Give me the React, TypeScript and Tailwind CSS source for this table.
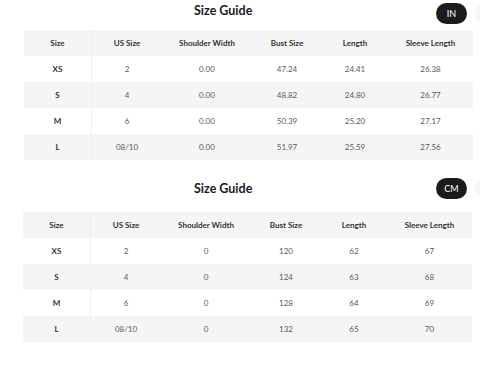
import React from 'react';

type Row = string[];

const headers = ['Size', 'US Size', 'Shoulder Width', 'Bust Size', 'Length', 'Sleeve Length'];

const inchRows: Row[] = [
  ['XS', '2', '0.00', '47.24', '24.41', '26.38'],
  ['S', '4', '0.00', '48.82', '24.80', '26.77'],
  ['M', '6', '0.00', '50.39', '25.20', '27.17'],
  ['L', '08/10', '0.00', '51.97', '25.59', '27.56'],
];

const cmRows: Row[] = [
  ['XS', '2', '0', '120', '62', '67'],
  ['S', '4', '0', '124', '63', '68'],
  ['M', '6', '0', '128', '64', '69'],
  ['L', '08/10', '0', '132', '65', '70'],
];

const cols = 'grid grid-cols-[68px_70px_90px_70px_66px_85px]';

const SizeTable: React.FC<{ rows: Row[]; className?: string }> = ({ rows, className }) => (
  <div className={`w-[449px] ${className ?? ''}`}>
    <div className={`${cols} h-[26px] bg-[#f5f5f5] text-[8px] font-bold text-[#333]`}>
      {headers.map((h, i) => (
        <div
          key={h}
          className={`flex items-center justify-center ${i === 0 ? 'border-r border-[#ececec]' : ''}`}
        >
          {h}
        </div>
      ))}
    </div>
    {rows.map((row, r) => (
      <div
        key={row[0]}
        className={`${cols} h-[26px] text-[8px] ${r % 2 === 1 ? 'bg-[#f5f5f5]' : 'bg-white'}`}
      >
        {row.map((cell, i) => (
          <div
            key={i}
            className={`flex items-center justify-center ${
              i === 0 ? 'border-r border-[#f0f0f0] font-bold text-[#333]' : 'text-[#5a5a5a]'
            }`}
          >
            {cell}
          </div>
        ))}
      </div>
    ))}
  </div>
);

const Header: React.FC<{ unit: string; titleClass: string }> = ({ unit, titleClass }) => (
  <div className="flex items-start">
    <h2 className={`ml-[194px] text-[12.5px] font-bold leading-none text-[#1a1a1a] ${titleClass}`}>
      Size Guide
    </h2>
    <div className="ml-auto mr-[-26px] flex gap-2">
      <span className="flex h-[21px] w-[31px] items-center justify-center rounded-full bg-[#1c1c1c] text-[9px] text-white">
        {unit}
      </span>
      <span className="h-[21px] w-[31px] rounded-full bg-[#f6f6f6]" />
    </div>
  </div>
);

export default function App() {
  return (
    <div
      className="w-[480px] h-[365px] overflow-hidden bg-white"
      style={{ fontFamily: 'Lato, "Noto Sans", sans-serif' }}
    >
      <div className="pt-[3px]">
        <Header unit="IN" titleClass="pt-[2px]" />
        <SizeTable rows={inchRows} className="ml-[24px] mt-[6px]" />
      </div>
      <div className="pt-[18px]">
        <Header unit="CM" titleClass="pt-[5px]" />
        <SizeTable rows={cmRows} className="ml-[23px] mt-[13px]" />
      </div>
    </div>
  );
}
